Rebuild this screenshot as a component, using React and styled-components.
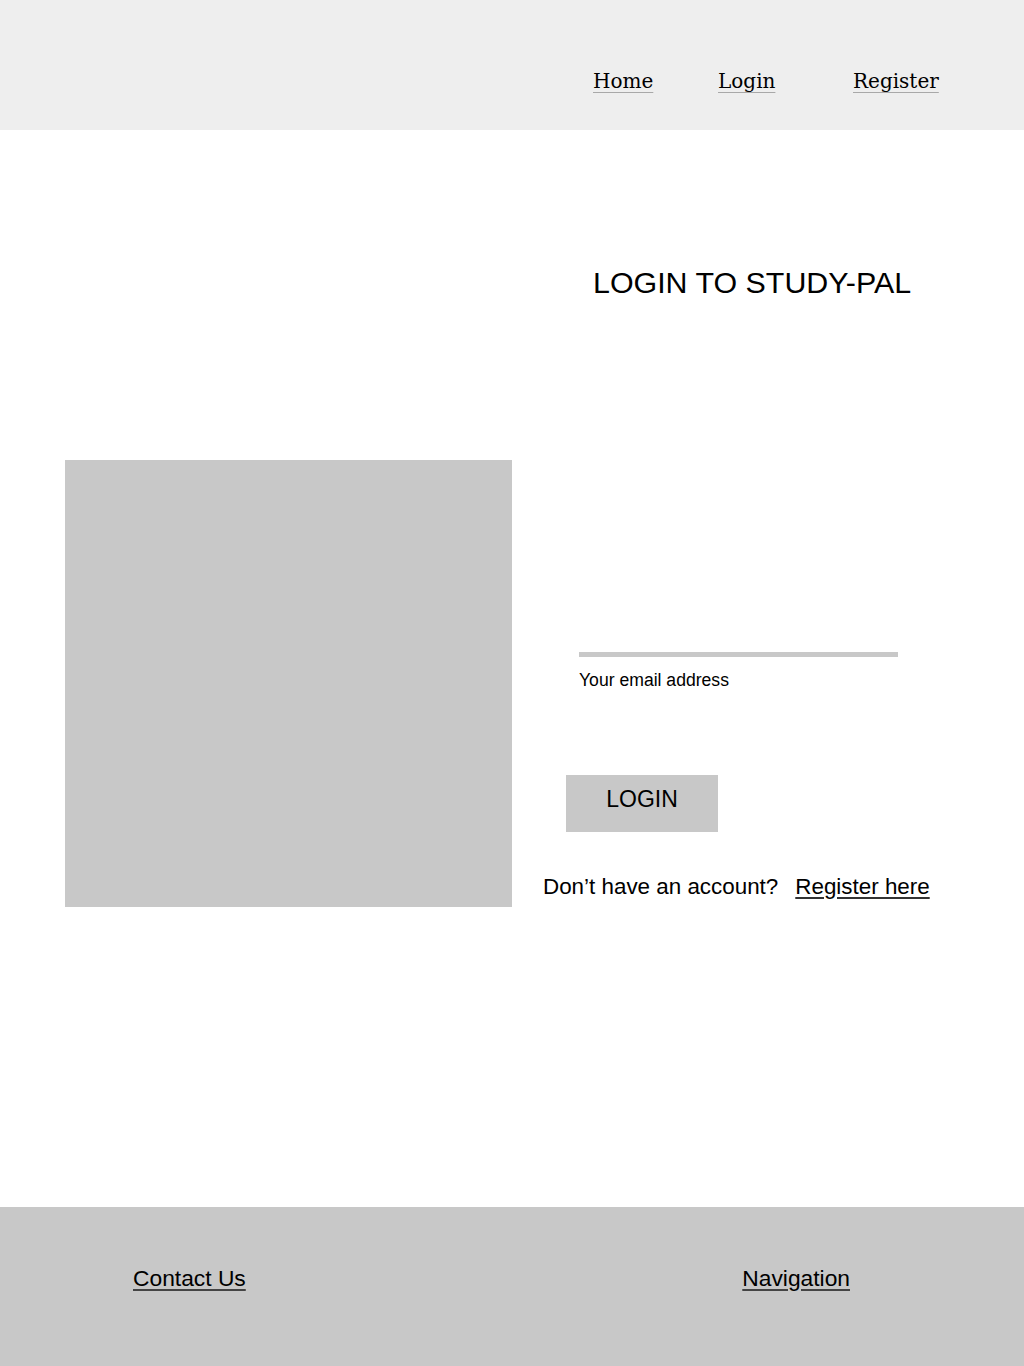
import React from "react";
import styled, { createGlobalStyle } from "styled-components";

const GlobalStyle = createGlobalStyle`
  html, body {
    margin: 0;
    padding: 0;
    background: #ffffff;
  }
  body {
    font-family: "Liberation Sans", Arial, sans-serif;
    color: #000;
  }
`;

const Page = styled.div`
  display: flex;
  flex-direction: column;
  min-height: 1366px;
`;

const Header = styled.header`
  box-sizing: border-box;
  height: 130px;
  background: #eeeeee;
  display: flex;
  padding: 69px 0 0 593px;
`;

const NavLink = styled.a`
  display: block;
  width: ${(p) => p.$w || "auto"};
  font-family: "DejaVu Serif", "Liberation Serif", serif;
  font-size: 20px;
  line-height: 24px;
  color: #000;
  text-decoration: underline;
  text-decoration-color: #a8a8a8;
  text-underline-offset: 4px;
  text-decoration-thickness: 1px;
  cursor: pointer;
`;

const Main = styled.main`
  flex: 1;
  display: flex;
  flex-direction: column;
  padding-top: 135px;
`;

const Title = styled.h1`
  margin: 0 0 161px 593px;
  font-size: 30.4px;
  line-height: 34px;
  font-weight: 400;
  white-space: nowrap;
`;

const Row = styled.div`
  display: flex;
`;

const ImageBox = styled.div`
  width: 447px;
  height: 447px;
  margin-left: 65px;
  background: #c8c8c8;
`;

const Form = styled.div`
  display: flex;
  flex-direction: column;
  align-items: flex-start;
  padding-top: 192px;
`;

const InputLine = styled.div`
  width: 319px;
  height: 5px;
  margin-left: 67px;
  background: #c8c8c8;
`;

const Label = styled.label`
  margin: 13px 0 0 67px;
  font-size: 17.6px;
  line-height: 20px;
`;

const Button = styled.button`
  box-sizing: border-box;
  width: 152px;
  height: 57px;
  margin: 85px 0 0 54px;
  padding: 11px 0 0;
  border: none;
  background: #c8c8c8;
  font-family: "Liberation Sans", Arial, sans-serif;
  font-size: 23px;
  line-height: 26px;
  color: #000;
  display: flex;
  justify-content: center;
  align-items: flex-start;
  cursor: pointer;
`;

const Prompt = styled.p`
  display: flex;
  gap: 17px;
  margin: 42px 0 0 31px;
  font-size: 22.4px;
  line-height: 26px;
  white-space: nowrap;
`;

const TextLink = styled.a`
  color: #000;
  text-decoration: underline;
  text-decoration-color: ${(p) => p.$line || "#333"};
  text-underline-offset: 3px;
  cursor: pointer;
`;

const Footer = styled.footer`
  box-sizing: border-box;
  height: 159px;
  background: #c8c8c8;
  display: flex;
  justify-content: space-between;
  align-items: flex-start;
  padding: 58px 174px 0 133px;
  font-size: 22.8px;
  line-height: 26px;
`;

export default function App() {
  return (
    <Page>
      <GlobalStyle />
      <Header>
        <NavLink $w="125px">Home</NavLink>
        <NavLink $w="135px">Login</NavLink>
        <NavLink>Register</NavLink>
      </Header>
      <Main>
        <Title>LOGIN TO STUDY-PAL</Title>
        <Row>
          <ImageBox />
          <Form>
            <InputLine />
            <Label>Your email address</Label>
            <Button>LOGIN</Button>
            <Prompt>
              <span>Don’t have an account?</span>
              <TextLink>Register here</TextLink>
            </Prompt>
          </Form>
        </Row>
      </Main>
      <Footer>
        <TextLink $line="#444">Contact Us</TextLink>
        <TextLink $line="#444">Navigation</TextLink>
      </Footer>
    </Page>
  );
}
